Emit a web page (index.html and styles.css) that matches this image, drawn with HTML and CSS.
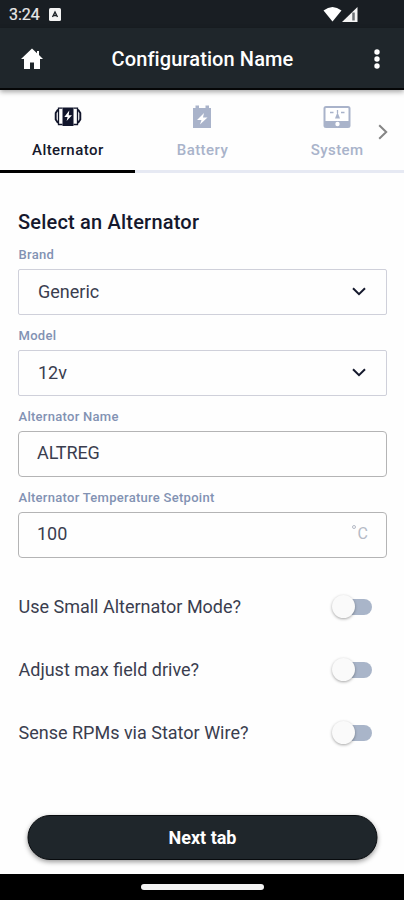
FILE: index.html
```html
<!DOCTYPE html>
<html lang="en">
<head>
<meta charset="utf-8">
<title>Configuration Name</title>
<link rel="stylesheet" href="styles.css">
</head>
<body>
<div class="screen">
  <div class="status">
    <span class="clock">3:24</span>
    <svg class="badge" width="12" height="13" viewBox="0 0 12 13"><rect width="12" height="13" rx="1.500" fill="#f4f4f4"/><path d="M3.500 9 6 4l2.500 5M4.500 7.500h3" fill="none" stroke="#1a1f24" stroke-width="1.300"/></svg>
    <svg class="signals" width="36" height="17" viewBox="0 0 36 17"><path d="M1.500 4.500Q10.500 -2.500 19.500 4.500L10.500 15.500Z" fill="#fff"/><path d="M20 16 35.500 1V16Z" fill="#f4f4f4"/><path d="M31.500 6.500v8" stroke="#6c7175" stroke-width="2.500"/></svg>
  </div>
  <header class="appbar">
    <svg class="home" width="24" height="22" viewBox="0 0 24 22"><path d="M12 .5 1 11h3v10h6v-6.500h4V21h6V11h3L19 7V3h-2v2.300Z" fill="#fff"/></svg>
    <h1>Configuration Name</h1>
    <svg class="more" width="6" height="20" viewBox="0 0 6 20" fill="#fff"><circle cx="3" cy="3" r="2.700"/><circle cx="3" cy="10" r="2.700"/><circle cx="3" cy="17" r="2.700"/></svg>
  </header>
  <nav class="tabs">
    <div class="tab active">
      <svg width="28" height="24" viewBox="0 0 28 24"><path d="M8.500 2.500h11v18.500h-11z" fill="#11152b"/><path d="M8.500 3.200H4.500v16.300h4M19.500 3.200h4v16.300h-4" fill="none" stroke="#11152b" stroke-width="1.300"/><path d="M4 4.500 1.700 8v6.500L4 18M24 4.500 26.300 8v6.500L24 18" fill="none" stroke="#11152b" stroke-width="1.900"/><path d="M15.300 5.500 10.300 12h3.300l-1 4 5.400-5.800h-3.300Z" fill="#fff"/></svg>
      <span>Alternator</span>
    </div>
    <div class="tab">
      <svg width="28" height="24" viewBox="0 0 28 24" fill="#a9b3ca"><path d="M5 3h18v20H5zM7.500 .5h3.500V3H7.500zM17.500 .5H21V3h-3.500z"/><path d="M16 8 9 15h4.500l-1.500 4.500 7.500-7H15Z" fill="#fff"/></svg>
      <span>Battery</span>
    </div>
    <div class="tab">
      <svg width="28" height="24" viewBox="0 0 28 24"><rect x="1.500" y="2" width="25" height="20" rx="1.500" fill="#fff" stroke="#a9b3ca" stroke-width="2"/><path d="M1.500 16h25v6h-25z" fill="#a9b3ca"/><path d="M7 7.500h3.500M18 7.500h3.500M14.500 5v3" stroke="#a9b3ca" stroke-width="1.300"/><path d="m14.500 7 2.500 6.500h-5Z" fill="#a9b3ca"/><circle cx="14.500" cy="19" r="2.200" fill="#fff"/></svg>
      <span>System</span>
    </div>
    <svg class="next" width="10" height="16" viewBox="0 0 10 16"><path d="m1.200 1.200 7 6.800-7 6.800" fill="none" stroke="#858585" stroke-width="2"/></svg>
  </nav>
  <main class="form">
    <h2>Select an Alternator</h2>
    <div class="label">Brand</div>
    <div class="field select"><span>Generic</span><svg width="14" height="9" viewBox="0 0 14 9"><path d="m1 1.200 6 6 6-6" fill="none" stroke="#15192d" stroke-width="2"/></svg></div>
    <div class="label">Model</div>
    <div class="field select"><span>12v</span><svg width="14" height="9" viewBox="0 0 14 9"><path d="m1 1.200 6 6 6-6" fill="none" stroke="#15192d" stroke-width="2"/></svg></div>
    <div class="label">Alternator Name</div>
    <div class="field"><span class="name">ALTREG</span></div>
    <div class="label">Alternator Temperature Setpoint</div>
    <div class="field"><span>100</span><span class="unit"><i></i>C</span></div>
    <div class="toggles">
      <div class="row"><span>Use Small Alternator Mode?</span><div class="switch"><div class="knob"></div></div></div>
      <div class="row"><span>Adjust max field drive?</span><div class="switch"><div class="knob"></div></div></div>
      <div class="row"><span>Sense RPMs via Stator Wire?</span><div class="switch"><div class="knob"></div></div></div>
    </div>
  </main>
  <div class="button">Next tab</div>
  <div class="navbar"><div class="handle"></div></div>
</div>
</body>
</html>
```

FILE: styles.css
```css
* { box-sizing: border-box; }
body { margin: 0; background: #fff; font-family: Roboto, "Liberation Sans", sans-serif; color: #3a3d4e; }
svg { display: block; flex: none; }
.screen { width: 404px; height: 900px; display: flex; flex-direction: column; overflow: hidden; background: #fefefe; }
.status { height: 28px; flex: none; background: #191e23; color: #e9e9e9; display: flex; align-items: center; padding: 0 46px 0 9px; }
.clock { font-size: 16px; width: 40px; padding-top: 1px; -webkit-text-stroke: .2px; }
.signals { margin-left: auto; }
.appbar { height: 62px; flex: none; background: #1f262b; border-bottom: 2px solid #050607; box-shadow: 0 2px 5px rgba(0,0,0,.35); display: grid; grid-template-columns: 24px 1fr 24px; align-items: center; padding: 2px 19px 0 20px; position: relative; z-index: 1; }
.more { justify-self: end; margin-right: 5px; }
h1 { margin: 0; color: #fff; font-size: 20px; font-weight: 500; line-height: 24px; letter-spacing: .1px; text-align: center; }
.tabs { height: 84px; flex: none; display: flex; position: relative; }
.tab { width: 134.67px; height: 83px; display: flex; flex-direction: column; align-items: center; padding-top: 15px; border-bottom: 3px solid #e6e9f3; color: #a9b3ca; font-weight: 500; font-size: 15px; letter-spacing: .45px; }
.tab svg { margin-left: 1px; }
.tab span { margin-top: 12px; line-height: 18px; padding-left: 1px; }
.tab.active { color: #15182b; border-color: #000; }
.next { position: absolute; left: 378px; top: 34px; }
.form { padding: 34px 17px 0 18px; flex: 1; }
h2 { margin: 0 0 7px; font-size: 20px; line-height: 28px; height: 28px; font-weight: 500; letter-spacing: .2px; color: #15182d; }
.label { height: 26px; padding: 4px 0 0 .5px; font-size: 13px; line-height: 16px; font-weight: 500; color: #8292b3; letter-spacing: .28px; }
.field { height: 46px; margin-bottom: 9px; border: 1.500px solid #b4b4b5; border-radius: 4px; display: flex; justify-content: space-between; align-items: center; padding: 0 18px 3px; font-size: 18px; }
.field.select { border-color: #cfd0da; border-radius: 2px; padding: 0 20px 1px 19px; }
.name { letter-spacing: -.1px; }
.unit { color: #b5bac6; font-size: 16px; display: flex; }
.unit i { width: 4px; height: 4px; margin: 1px 2px 0 0; border-radius: 50%; border: 1px solid #b5bac6; }
.toggles { padding-top: 8px; }
.row { height: 63px; display: flex; align-items: center; justify-content: space-between; padding: 0 15px 0 .5px; font-size: 18px; }
.switch { width: 40px; height: 16px; border-radius: 8px; background: linear-gradient(90deg, transparent 10px, #a9b5c9 10px); display: flex; align-items: center; }
.knob { width: 23px; height: 23px; flex: none; border-radius: 50%; background: #fafafa; box-shadow: 0 1px 3px rgba(0,0,0,.35); }
.button { width: 350px; height: 45px; flex: none; margin: 0 auto 14px; border-radius: 23px; border: 1px solid #080b0e; background: #1f262b; box-shadow: 0 2px 5px rgba(0,0,0,.4); color: #fff; font-size: 18px; font-weight: 700; display: flex; align-items: center; justify-content: center; transform: translateX(.5px); }
.navbar { height: 26px; flex: none; background: #000; display: flex; justify-content: center; padding-top: 10px; }
.handle { width: 123px; height: 6px; background: #f4f4f4; border-radius: 3px; }
```
